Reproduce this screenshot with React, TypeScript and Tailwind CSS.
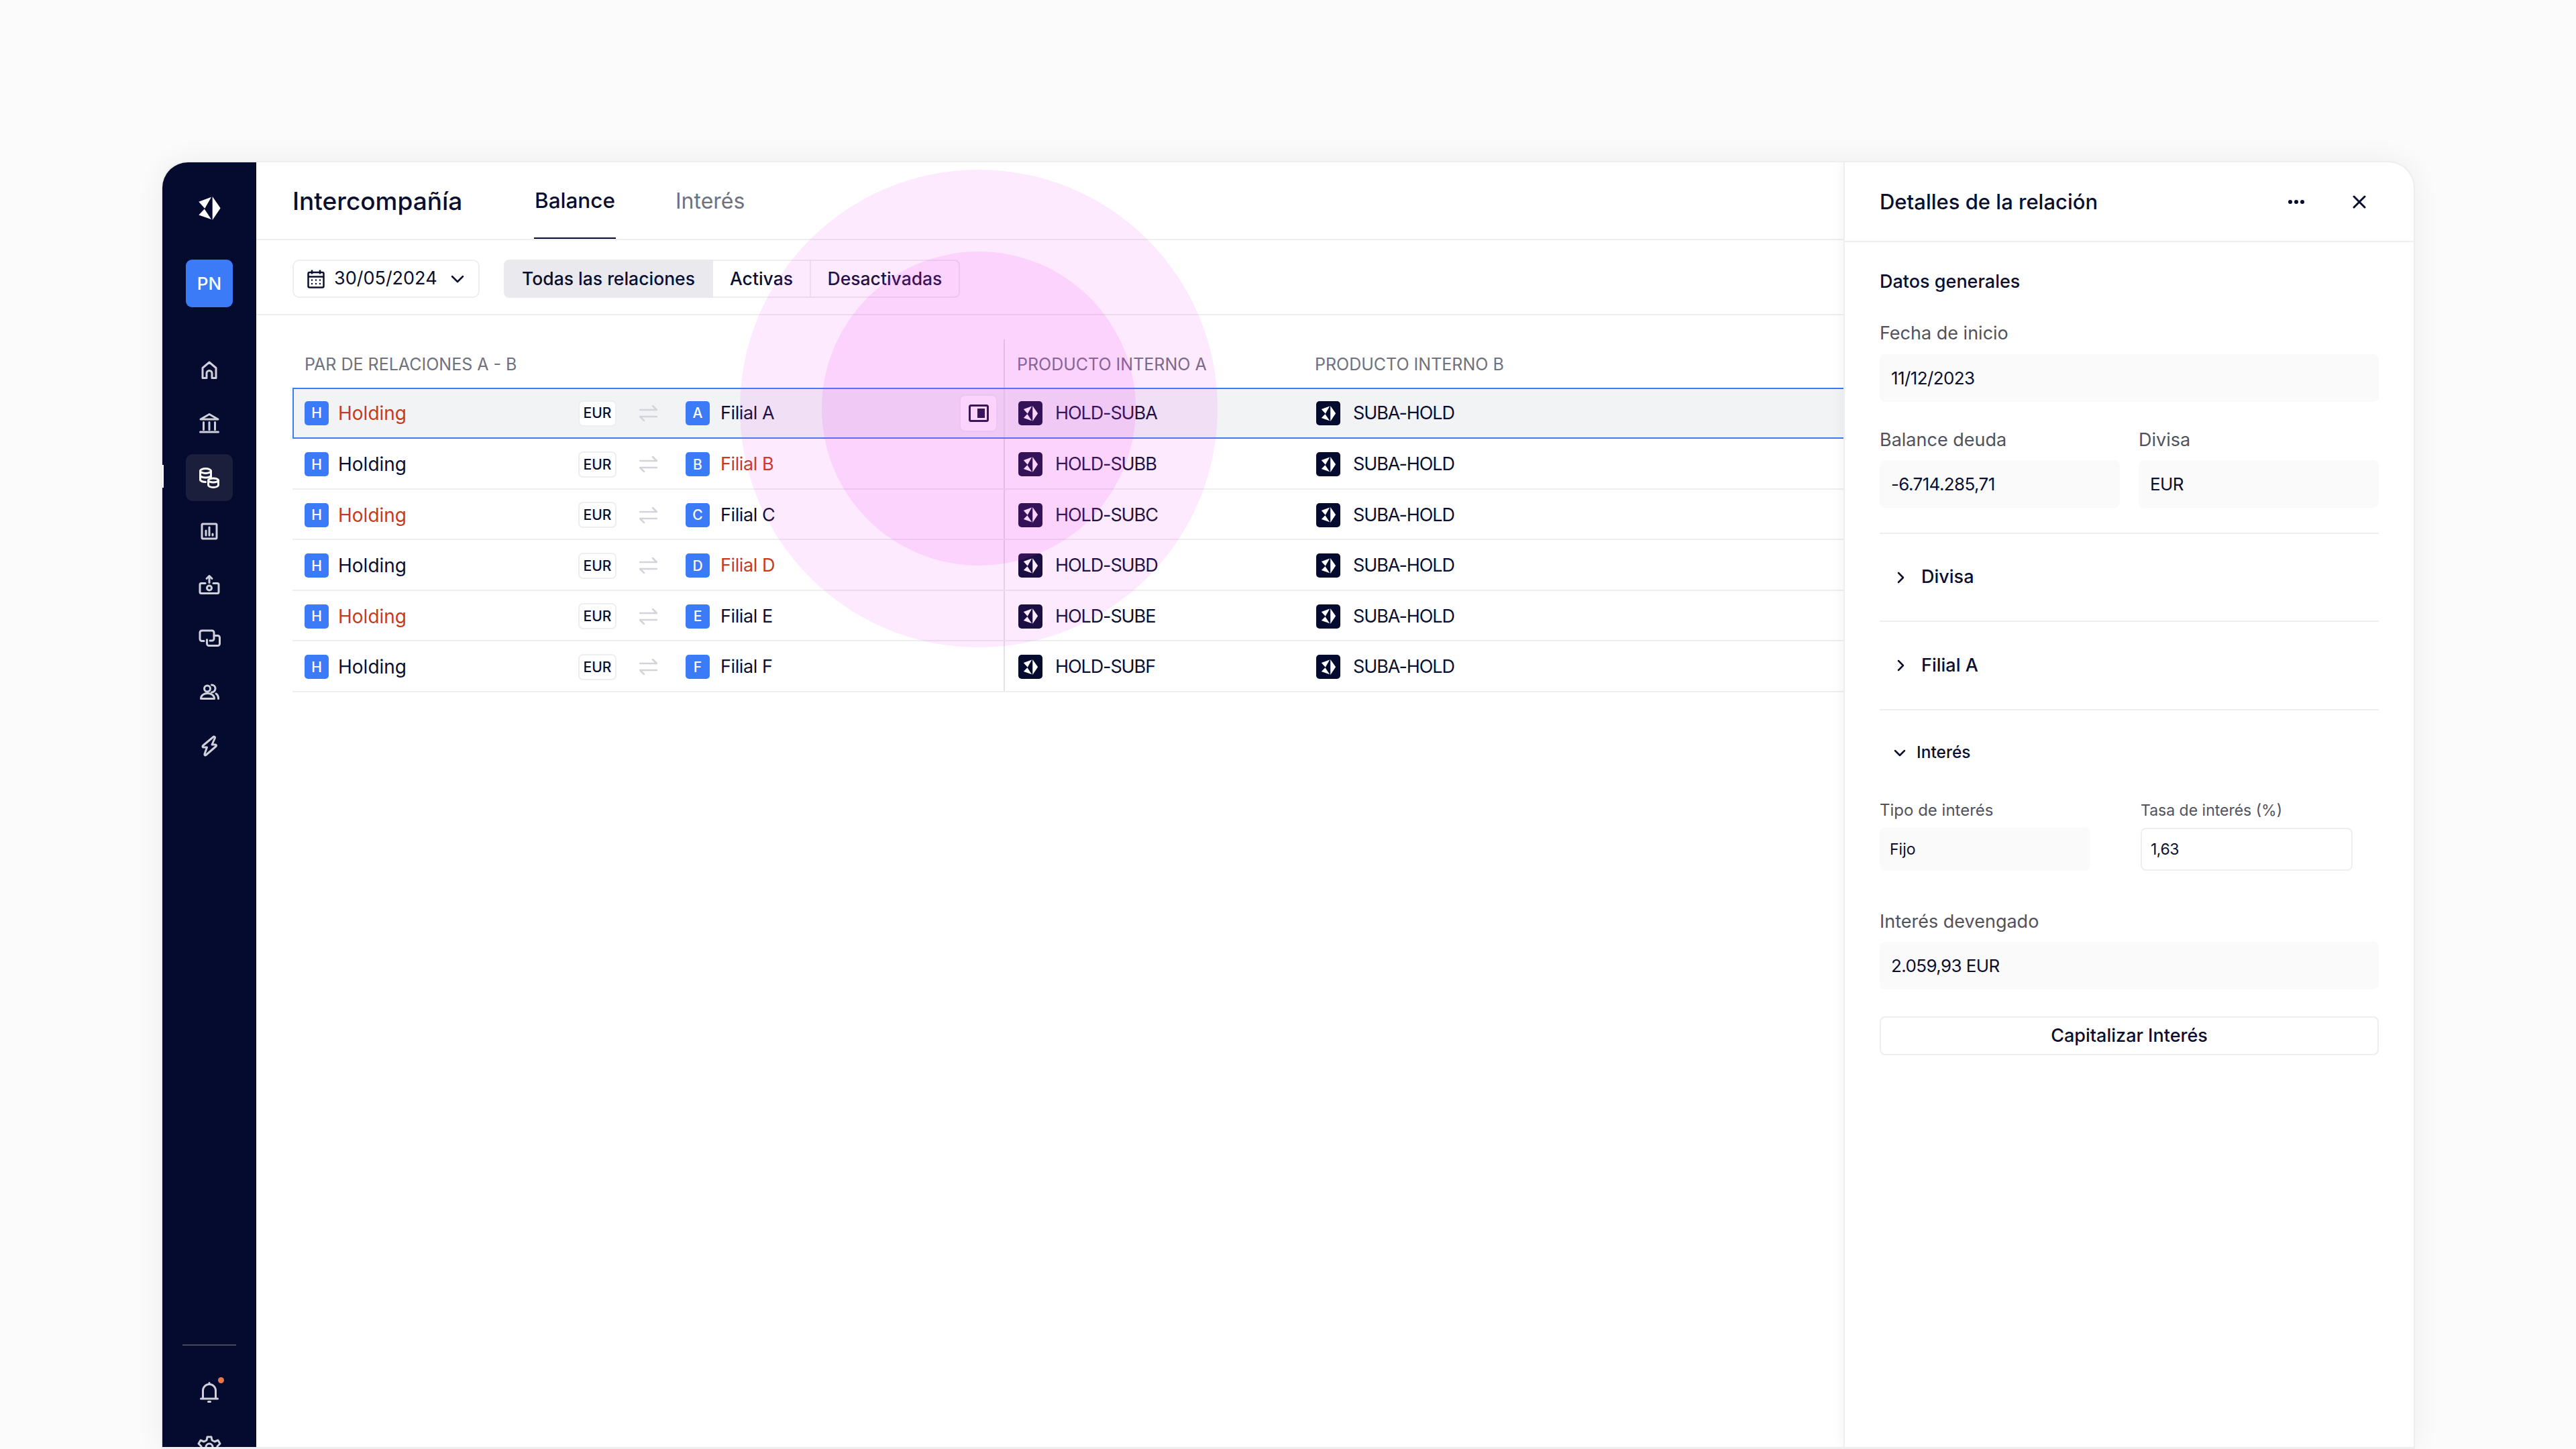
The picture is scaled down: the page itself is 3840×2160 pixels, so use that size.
import React from "react";

const stroke = "#cfd0d9";

function Logo({ size = 36, fill = "#ffffff" }: { size?: number; fill?: string }) {
  return (
    <svg width={size} height={size} viewBox="0 0 36 36" fill={fill}>
      <path d="M22.300 0 L34.600 17.700 L22.300 36 Z" />
      <path d="M1.300 8 L20.600 0.700 L10.600 18.300 Z" />
      <path d="M1.300 28.300 L10 19 L20.600 35 Z" />
    </svg>
  );
}

function Ico({ children, color = stroke, dy = 0 }: { children: React.ReactNode; color?: string; dy?: number }) {
  return (
    <svg width={36} height={36} viewBox={`0 ${dy} 36 36`} fill="none" stroke={color} strokeWidth="3" strokeLinecap="round" strokeLinejoin="round">
      {children}
    </svg>
  );
}

const navIcons: React.ReactNode[] = [
  <Ico key="home"><path d="M8 29.500V14.500L18 6l10 8.500v15h-6v-7a4 4 0 0 0-8 0v7Z" /></Ico>,
  <Ico key="bank" dy={1.500}>
    <path d="M18 5 5 12.500h26Z" />
    <path d="M9.500 17v11M18 17v11M26.500 17v11" />
    <path d="M4.500 31.500h27" />
  </Ico>,
  <Ico key="coins" color="#ffffff">
    <ellipse cx="12.500" cy="8" rx="8" ry="3.500" />
    <path d="M4.500 8v13c0 2 3.500 3.500 8 3.500" />
    <path d="M4.500 14.500c0 2 3.500 3.500 8 3.500s8-1.500 8-3.500" />
    <path d="M20.500 8v9" />
    <ellipse cx="24" cy="22" rx="7.500" ry="3" />
    <path d="M16.500 22v7c0 2 3.400 3.500 7.500 3.500s7.500-1.500 7.500-3.500v-7" />
  </Ico>,
  <Ico key="chart">
    <rect x="7" y="7" width="22" height="22" rx="1.500" />
    <path d="M13 24v-7M18 24V12M23 24v-2" />
  </Ico>,
  <Ico key="upload">
    <path d="M12 15.500H6a2 2 0 0 0-2 2v11a2 2 0 0 0 2 2h24a2 2 0 0 0 2-2v-11a2 2 0 0 0-2-2h-6" />
    <path d="M18 14.500V4.500M14 8.500l4-4 4 4" />
    <circle cx="18" cy="22.500" r="3.500" />
  </Ico>,
  <Ico key="copy" dy={1}>
    <path d="M10 22.500H7a3 3 0 0 1-3-3V10a3 3 0 0 1 3-3h15a3 3 0 0 1 3 3v9a3 3 0 0 1-3 3h-3" />
    <path d="M25 14.500h5.500a3 3 0 0 1 3 3v9a3 3 0 0 1-3 3H17.500a3 3 0 0 1-3-3v-6" />
  </Ico>,
  <Ico key="users">
    <circle cx="15" cy="12.500" r="4.500" />
    <path d="M5.500 27.500c0-5 4.500-8 10-8s10 3 10 8Z" />
    <path d="M21.500 7a5.500 5.500 0 0 1 0 11" />
    <path d="M28 20c2.500 1.500 3.500 4 3.500 7.500" />
  </Ico>,
  <Ico key="bolt"><path d="M24 4.500 8.500 17.500c-1 1-.500 2.500 1 2.500h5l-3.500 10c-.500 1.500 1 2.500 2 1.500L28 18.500c1-1 .500-2.500-1-2.500h-5l4.500-10c.500-1.500-1.500-2.500-2.500-1.500Z" /></Ico>,
];

function Badge({ l }: { l: string }) {
  return (
    <span className="flex h-[36px] w-[36px] shrink-0 items-center justify-center rounded-[5px] bg-[#3b7bf7] text-[21px] font-medium text-white">
      {l}
    </span>
  );
}

function ProductIcon() {
  return (
    <span className="flex h-[36px] w-[36px] shrink-0 items-center justify-center rounded-[5px] bg-[#040b2e]">
      <Logo size={23} />
    </span>
  );
}

const rows = [
  { l: "A", red: "h", a: "HOLD-SUBA" },
  { l: "B", red: "f", a: "HOLD-SUBB" },
  { l: "C", red: "h", a: "HOLD-SUBC" },
  { l: "D", red: "f", a: "HOLD-SUBD" },
  { l: "E", red: "h", a: "HOLD-SUBE" },
  { l: "F", red: "", a: "HOLD-SUBF" },
];

function Row({ r, i }: { r: (typeof rows)[number]; i: number }) {
  const selected = i === 0;
  return (
    <div
      className={
        selected
          ? "flex h-[76px] items-center border-y-2 border-l-2 border-[#3b7bf7] bg-[#f2f3f5]"
          : "flex h-[75.500px] items-center border-b-2 border-[#eeeef1]"
      }
    >
      <div className={selected ? "flex h-full w-[1058px] shrink-0 items-center pl-[16px]" : "flex h-full w-[1060px] shrink-0 items-center pl-[18px] pt-[3px]"}>
        <Badge l="H" />
        <span className={r.red === "h" ? "ml-[14px] w-[358px] text-[28px] text-[#c53b1c]" : "ml-[14px] w-[358px] text-[28px] text-[#0a0f30]"}>Holding</span>
        <span className="flex h-[39px] w-[57px] items-center justify-center rounded-[7px] border-2 border-[#eeeef1] bg-white text-[21px] font-medium text-[#0a0f30]">EUR</span>
        <svg className="ml-[34px]" width="27" height="24" viewBox="0 0 27 24" fill="none" stroke="#d3d4db" strokeWidth="2.500" strokeLinecap="round" strokeLinejoin="round">
          <path d="M1 7h25M20 1l6 6" />
          <path d="M26 17H1M7 23l-6-6" />
        </svg>
        <span className="ml-[42px]"><Badge l={r.l} /></span>
        <span className={r.red === "f" ? "ml-[16px] flex-1 tracking-[-0.4px] text-[#c53b1c]" : "ml-[16px] flex-1 tracking-[-0.4px] text-[#0a0f30]"}>Filial {r.l}</span>
        {selected && (
          <span className="mr-[9px] flex h-[56px] w-[57px] items-center justify-center rounded-[8px] border-2 border-[#eeeef1] bg-white">
            <svg width="30" height="26" viewBox="0 0 30 26" fill="none" stroke="#0a0f30" strokeWidth="3">
              <rect x="1.500" y="1.500" width="27" height="23" rx="2" />
              <rect x="13" y="6" width="11" height="14" fill="#0a0f30" stroke="none" />
            </svg>
          </span>
        )}
      </div>
      <div className={selected ? "flex h-full flex-1 items-center border-l-2 border-[#e2e2e8] pl-[20px] tracking-[-1.1px]" : "flex h-full flex-1 items-center border-l-2 border-[#e2e2e8] pl-[20px] pt-[3px] tracking-[-1.1px]"}>
        <ProductIcon />
        <span className="ml-[19px] w-[389px] text-[#0a0f30]">{r.a}</span>
        <ProductIcon />
        <span className="ml-[19px] text-[#0a0f30]">SUBA-HOLD</span>
      </div>
    </div>
  );
}

function Label({ children, small }: { children: React.ReactNode; small?: boolean }) {
  return <div className={small ? "text-[24px] leading-[30px] text-[#50525e]" : "text-[27px] leading-[34px] text-[#50525e]"}>{children}</div>;
}

function Field({ children, h = "h-[71px]", small }: { children: React.ReactNode; h?: string; small?: boolean }) {
  return (
    <div className={h + (small ? " flex items-center rounded-[8px] bg-[#fafafa] px-[15px] text-[23px] text-[#0a0f30]" : " flex items-center rounded-[8px] bg-[#fafafa] px-[17px] text-[26px] tracking-[-0.6px] text-[#0a0f30]")}>
      {children}
    </div>
  );
}

function Chevron({ down }: { down?: boolean }) {
  return (
    <svg width="18" height="18" viewBox="0 0 18 18" fill="none" stroke="#0a0f30" strokeWidth="2.500" strokeLinecap="round" strokeLinejoin="round">
      {down ? <path d="M2 6l7 7 7-7" /> : <path d="M4 2l7 7-7 7" />}
    </svg>
  );
}

export default function App() {
  return (
    <div className="relative h-[2160px] w-[3840px] overflow-hidden bg-[#fbfbfb] pl-[240px] pt-[240px] font-['Inter',sans-serif]">
      <div className="flex h-[1920px] w-[3360px] overflow-hidden rounded-t-[40px] border-2 border-b-[3px] border-[#eeeef1] bg-white shadow-[0_0_40px_rgba(10,15,48,0.06)]">
        {/* sidebar */}
        <aside className="relative flex w-[140px] shrink-0 flex-col items-center bg-[#040b2e]">
          <div className="mt-[51px] shrink-0"><Logo size={35} /></div>
          <div className="mt-[59px] flex h-[71px] w-[70px] shrink-0 items-center justify-center rounded-[9px] bg-[#3b7bf7] text-[26px] font-medium text-white">PN</div>
          <nav className="mt-[59px] flex shrink-0 flex-col gap-[10px]">
            {navIcons.map((ic, i) => (
              <div key={i} className={i === 2 ? "flex h-[70px] w-[70px] items-center justify-center rounded-[10px] bg-[#1b1f3c]" : "flex h-[70px] w-[70px] items-center justify-center"}>
                {ic}
              </div>
            ))}
          </nav>
          <div className="mt-[857px] h-[2px] w-[80px] shrink-0 bg-[#45475a]" />
          <div className="relative mt-[34px] flex h-[70px] w-[70px] shrink-0 items-center justify-center">
            <Ico>
              <path d="M8.500 27V16a9.500 9.500 0 0 1 19 0v11" />
              <path d="M5.500 28h25M18 6V4.500M16.500 32.500h3" />
            </Ico>
            <span className="absolute right-[13px] top-[13px] h-[9px] w-[9px] rounded-full bg-[#e8764f]" />
          </div>
          <div className="mt-[12px] flex h-[70px] w-[70px] shrink-0 items-center justify-center">
            <Ico>
              <circle cx="18" cy="18" r="5" />
              <path d="M15 3h6l1 5 4 2 5-2 3 5-4 4v3l4 4-3 5-5-2-4 2-1 5h-6l-1-5-4-2-5 2-3-5 4-4v-3l-4-4 3-5 5 2 4-2Z" />
            </Ico>
          </div>
          <span className="absolute left-0 top-[451px] h-[34px] w-[2px] bg-white" />
        </aside>

        {/* main */}
        <main className="flex w-[2366px] shrink-0 flex-col">
          <header className="flex h-[116px] shrink-0 items-center border-b-2 border-[#eeeef1] pl-[54px]">
            <h1 className="w-[360px] pt-[2px] text-[37px] font-medium text-[#0a0f30]">Intercompañía</h1>
            <div className="flex h-full w-[122px] items-center justify-center border-b-2 border-[#0a0f30] pt-[2px] text-[31.500px] font-medium text-[#0a0f30]">Balance</div>
            <div className="ml-[89px] pt-[2px] text-[32px] text-[#6e7180]">Interés</div>
          </header>
          <div className="flex h-[112px] shrink-0 items-center border-b-2 border-[#eeeef1] pl-[54px] pt-[5px]">
            <div className="flex h-[57px] w-[279px] items-center rounded-[10px] border-2 border-[#eeeef1] pl-[20px] text-[27px] text-[#0a0f30]">
              <svg width="26" height="28" viewBox="0 0 26 28" fill="none" stroke="#0a0f30" strokeWidth="2.500">
                <rect x="1.500" y="4" width="23" height="22.500" rx="2" />
                <path d="M1.500 10.500h23M7 0.500v6M19 0.500v6" />
                <path d="M7 15.500h.01M13 15.500h.01M19 15.500h.01M7 21h.01M13 21h.01M19 21h.01" strokeLinecap="round" />
              </svg>
              <span className="ml-[14px]">30/05/2024</span>
              <svg className="ml-[20px]" width="20" height="14" viewBox="0 0 20 14" fill="none" stroke="#0a0f30" strokeWidth="2.500" strokeLinecap="round" strokeLinejoin="round"><path d="M2 3l8 8 8-8" /></svg>
            </div>
            <div className="ml-[36px] flex h-[57px] text-[26.500px] font-medium text-[#0a0f30]">
              <div className="flex w-[312px] items-center justify-center rounded-l-[8px] bg-[#e9e9ee]">Todas las relaciones</div>
              <div className="flex w-[144px] items-center justify-center border-y-2 border-[#eeeef1]">Activas</div>
              <div className="flex w-[224px] items-center justify-center rounded-r-[8px] border-2 border-[#eeeef1]">Desactivadas</div>
            </div>
          </div>
          <div className="pl-[54px] text-[27px]">
            <div className="flex h-[108px]">
              <div className="flex w-[1060px] shrink-0 items-center pl-[18px] pt-[40px] text-[25px] text-[#6e7180]">PAR DE RELACIONES A - B</div>
              <div className="mt-[36px] flex flex-1 items-center border-l-2 border-[#e2e2e8] pl-[18px] pt-[4px] text-[25px] text-[#6e7180]">
                <span className="w-[444px]">PRODUCTO INTERNO A</span>
                <span>PRODUCTO INTERNO B</span>
              </div>
            </div>
            {rows.map((r, i) => (
              <Row key={r.l} r={r} i={i} />
            ))}
          </div>
        </main>

        {/* detail panel */}
        <section className="relative flex-1 border-l-2 border-[#eeeef1] shadow-[-6px_0_14px_rgba(10,15,48,0.03)]">
          <div className="flex h-[119px] items-center border-b-2 border-[#eeeef1] pl-[52px]">
            <h2 className="w-[609px] pt-[1px] text-[31px] font-medium text-[#0a0f30]">Detalles de la relación</h2>
            <svg width="24" height="6" viewBox="0 0 24 6" fill="#0a0f30"><circle cx="3" cy="3" r="3" /><circle cx="12" cy="3" r="3" /><circle cx="21" cy="3" r="3" /></svg>
            <svg className="ml-[72px]" width="20" height="20" viewBox="0 0 20 20" fill="none" stroke="#0a0f30" strokeWidth="3" strokeLinecap="round"><path d="M2 2l16 16M18 2 2 18" /></svg>
          </div>
          <div className="flex flex-col px-[52px] pt-[42px]">
            <div className="text-[27px] font-medium leading-[34px] text-[#0a0f30]">Datos generales</div>
            <div className="mt-[43px]"><Label>Fecha de inicio</Label></div>
            <div className="mt-[14px]"><Field>11/12/2023</Field></div>
            <div className="mt-[40px] grid grid-cols-2 gap-x-[28px]">
              <div>
                <Label>Balance deuda</Label>
                <div className="mt-[13px]"><Field>-6.714.285,71</Field></div>
              </div>
              <div>
                <Label>Divisa</Label>
                <div className="mt-[13px]"><Field>EUR</Field></div>
              </div>
            </div>
            <div className="mt-[37px] h-[2px] bg-[#eeeef1]" />
            <div className="flex h-[131px] items-center gap-[20px] border-b-2 border-[#eeeef1] pl-[24px] text-[27px] font-medium text-[#0a0f30]"><Chevron /><span>Divisa</span></div>
            <div className="flex h-[132px] items-center gap-[20px] border-b-2 border-[#eeeef1] pl-[24px] text-[27px] font-medium text-[#0a0f30]"><Chevron /><span>Filial A</span></div>
            <div className="flex h-[125px] items-center gap-[16px] pl-[21px] text-[24.500px] font-medium text-[#0a0f30]"><Chevron down /><span>Interés</span></div>
            <div className="mt-[9px] flex gap-[75px]">
              <div className="w-[314px]">
                <Label small>Tipo de interés</Label>
                <div className="mt-[11px]"><Field h="h-[64px]" small>Fijo</Field></div>
              </div>
              <div className="w-[316px]">
                <div className="text-[23px] leading-[30px] text-[#50525e]">Tasa de interés (%)</div>
                <div className="mt-[11px] flex h-[64px] items-center rounded-[8px] border-2 border-[#eeeef1] px-[13px] text-[23px] tracking-[-0.5px] text-[#0a0f30]">1,63</div>
              </div>
            </div>
            <div className="mt-[59px]"><Label>Interés devengado</Label></div>
            <div className="mt-[13px]"><Field>2.059,93 EUR</Field></div>
            <div className="mt-[40px] flex h-[58px] items-center justify-center rounded-[8px] border-2 border-[#eeeef1] text-[27px] font-medium text-[#0a0f30]">Capitalizar Interés</div>
          </div>
        </section>
      </div>

      {/* pink pulse over the row */}
      <div className="pointer-events-none absolute left-[1103px] top-[253px] flex h-[712px] w-[712px] items-center justify-center rounded-full bg-[#f02ff5]/10">
        <div className="h-[468px] w-[468px] rounded-full bg-[#f02ff5]/12" />
      </div>
    </div>
  );
}
